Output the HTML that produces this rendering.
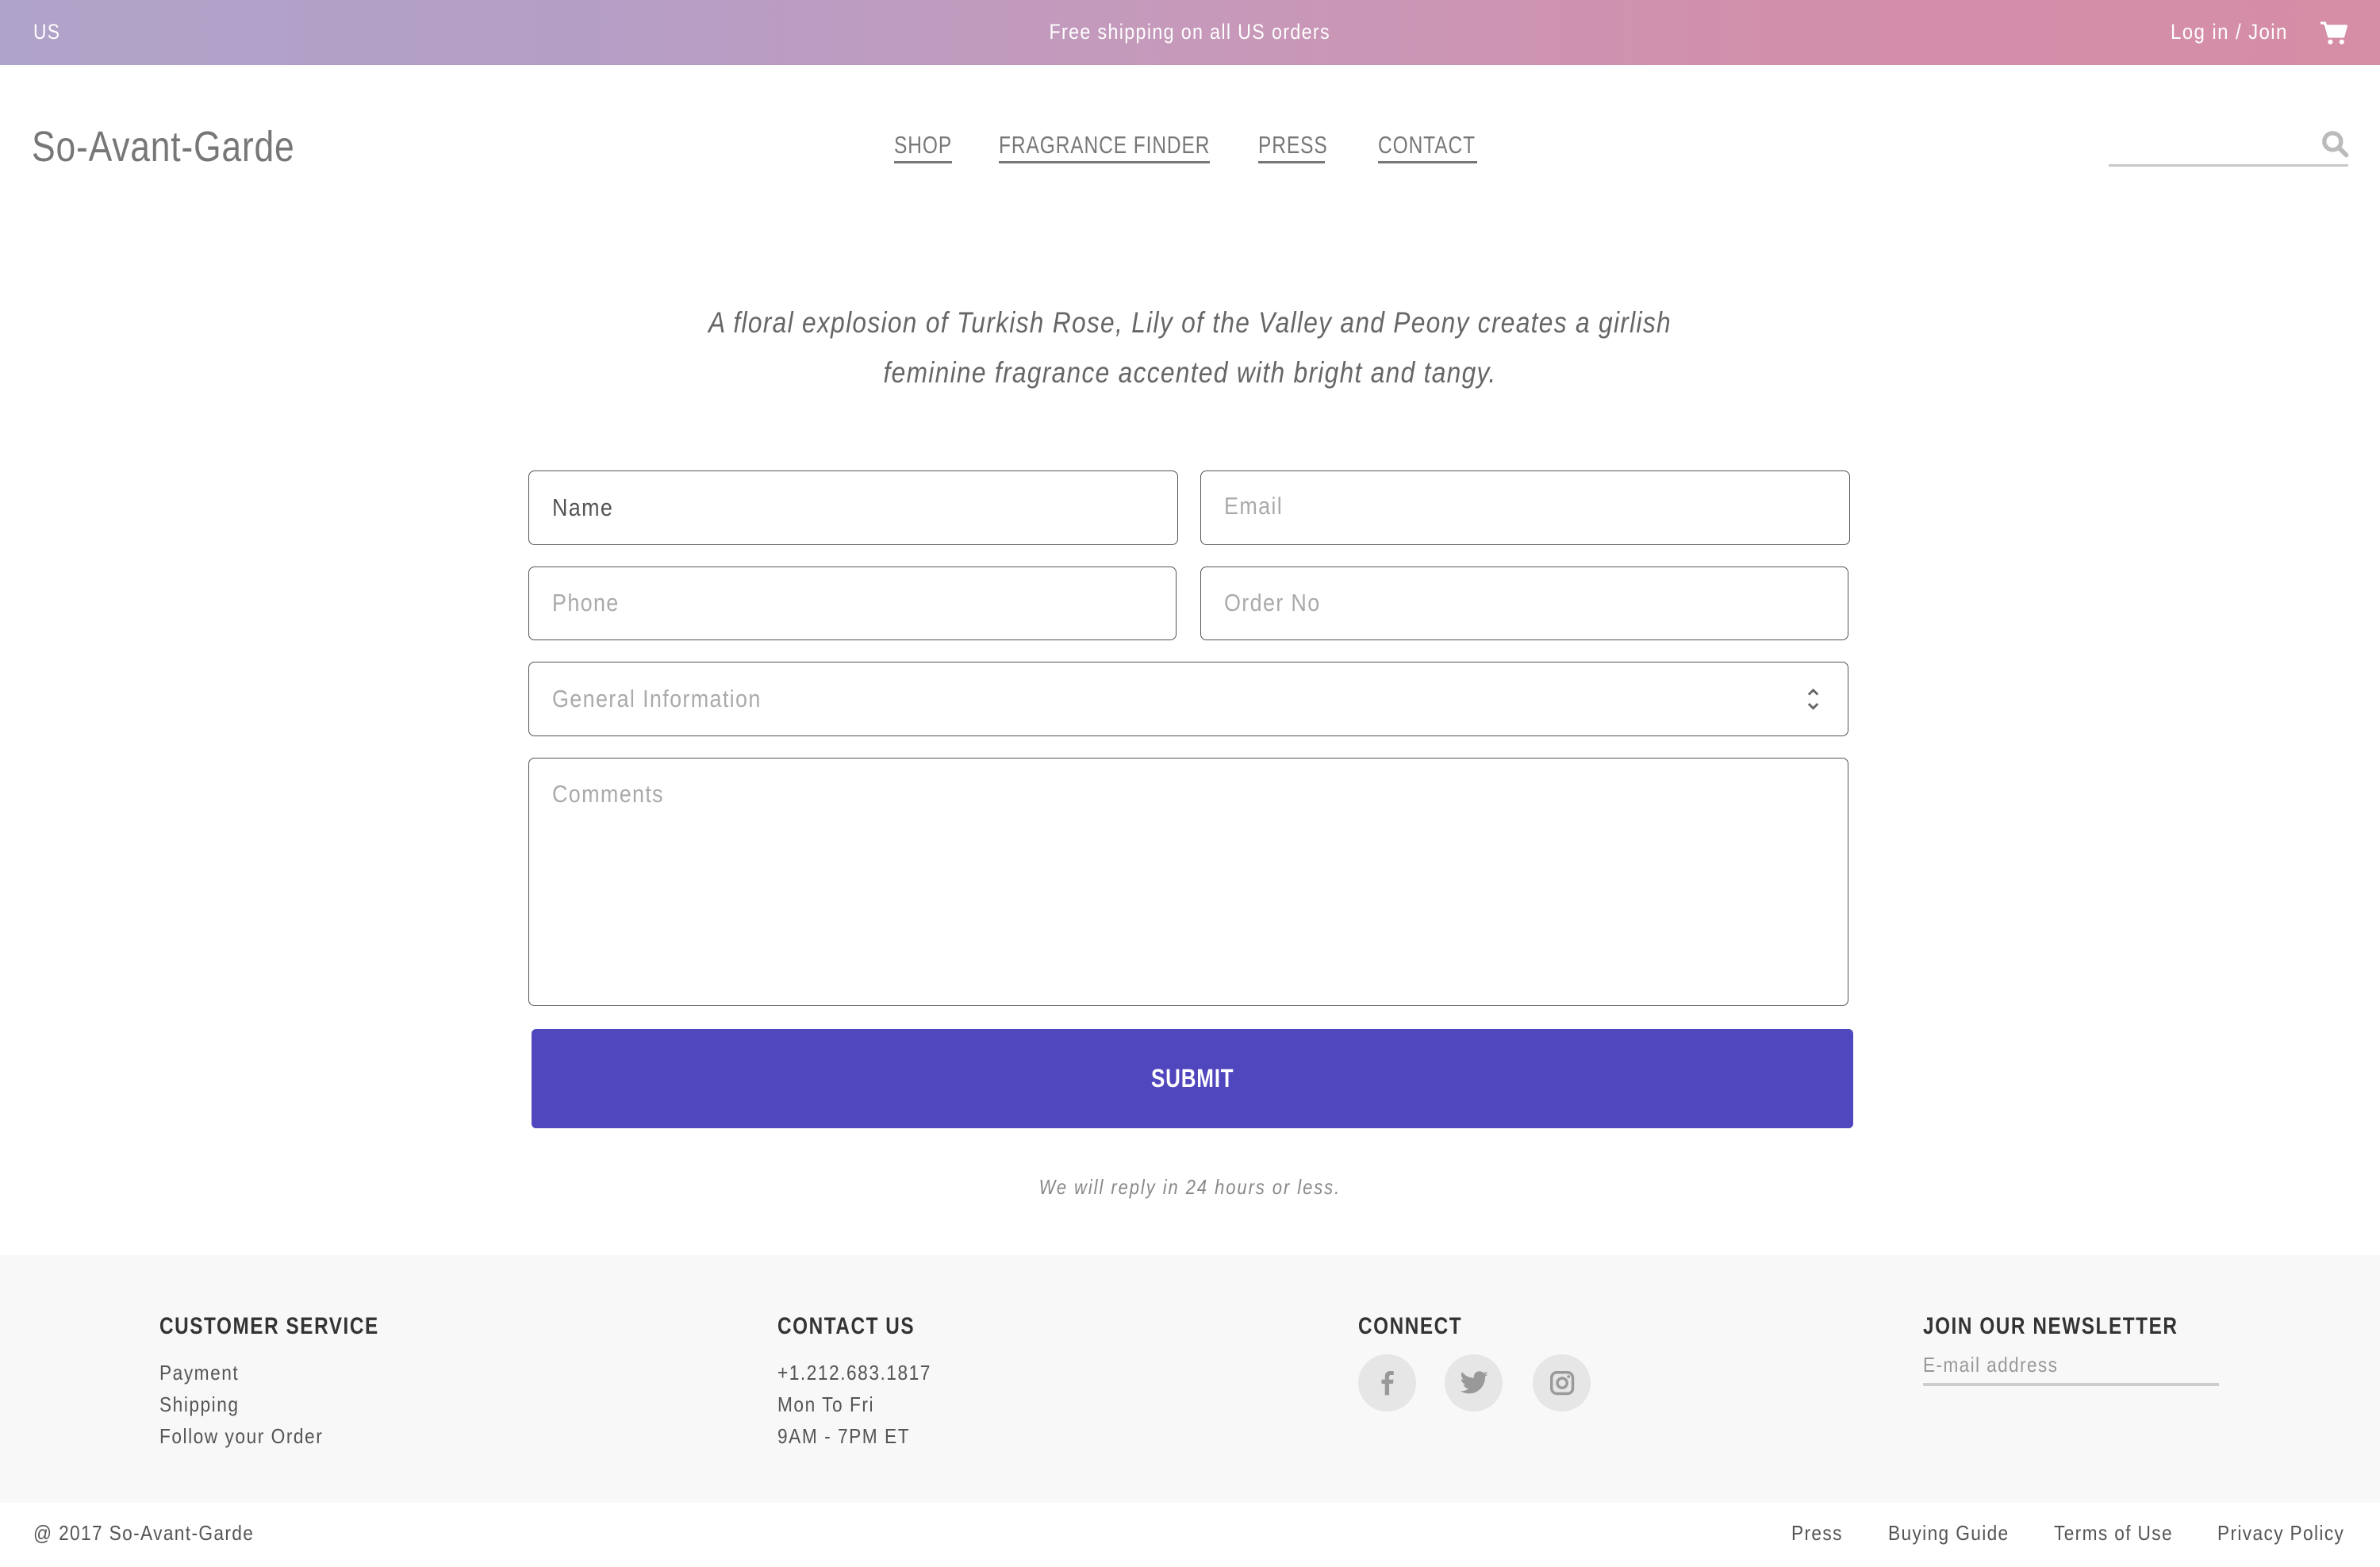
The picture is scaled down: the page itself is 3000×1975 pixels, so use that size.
<!DOCTYPE html>
<html><head><meta charset="utf-8">
<style>
html,body{margin:0;padding:0;width:3000px;height:1975px;overflow:hidden;background:#fff}
#w{position:relative;width:1568px;height:1032.3px;zoom:1.91327;font-family:"Liberation Sans",sans-serif;color:#666}
.a{position:absolute;white-space:nowrap}
.s{display:inline-block;transform-origin:left center}
#top{position:absolute;left:0;top:0;width:1568px;height:43px;background:linear-gradient(90deg,#b0a3c9 0%,#b59ec6 25%,#c699ba 50%,#d28fab 75%,#d68da6 100%)}
#top .a{color:#fff;font-size:14px;letter-spacing:.8px;top:13px}
.nav{font-size:16px;letter-spacing:.6px;color:#777;top:87px;border-bottom:2px solid #777;padding-bottom:1px;line-height:18px;overflow:visible}
.nav .s{transform:scaleX(.8)}
.box{position:absolute;border:1px solid #555;border-radius:4px;box-sizing:border-box;background:#fff}
.ph{position:absolute;left:15px;font-size:16px;letter-spacing:.8px;color:#aaa;transform:scaleX(.88);transform-origin:left center}
.fh{font-size:15.5px;font-weight:bold;color:#333;letter-spacing:1px;top:865px;transform:scaleX(.82);transform-origin:left center}
.fl{font-size:13.5px;color:#555;letter-spacing:.9px;transform:scaleX(.88);transform-origin:left center}
.ci{position:absolute;top:892px;width:38px;height:38px;border-radius:50%;background:#e6e6e6}
.ci svg{position:absolute;left:9px;top:9px}
.bl{font-size:13.5px;color:#555;letter-spacing:.8px;top:1003px;transform:scaleX(.88);transform-origin:left center}
</style></head><body><div id="w">
<div id="top">
<div class="a" style="left:22px;transform:scaleX(.85);transform-origin:left">US</div>
<div class="a" style="left:0;width:1568px;text-align:center"><span class="s" style="transform:scaleX(.87);transform-origin:center">Free shipping on all US orders</span></div>
<div class="a" style="left:1430px;transform:scaleX(.9);transform-origin:left">Log in / Join</div>
<svg class="a" style="left:1529px;top:14px" width="18" height="16" viewBox="0 0 18 16"><path d="M0 1h3l2.5 9h9.5l2-7H4" fill="#fff" stroke="#fff" stroke-width="1.6" stroke-linejoin="round"/><circle cx="6.5" cy="13.5" r="1.6" fill="#fff"/><circle cx="14" cy="13.5" r="1.6" fill="#fff"/></svg>
</div>
<div class="a" style="left:21px;top:81px;font-size:28px;color:#777;letter-spacing:.5px;transform:scaleX(.83);transform-origin:left">So-Avant-Garde</div>
<div class="a nav" style="left:589px;width:38px"><span class="s">SHOP</span></div>
<div class="a nav" style="left:658px;width:139px"><span class="s">FRAGRANCE FINDER</span></div>
<div class="a nav" style="left:829px;width:44px"><span class="s">PRESS</span></div>
<div class="a nav" style="left:908px;width:65px"><span class="s">CONTACT</span></div>
<div class="a" style="left:1389px;top:108px;width:158px;height:2px;background:#c8c8c8"></div>
<svg class="a" style="left:1529px;top:85px" width="19" height="19" viewBox="0 0 19 19"><circle cx="8" cy="8" r="5.5" fill="none" stroke="#bbb" stroke-width="2.8"/><path d="M12 12l5 5" stroke="#bbb" stroke-width="3" stroke-linecap="round"/></svg>
<div class="a" style="left:0;width:1568px;top:196px;text-align:center;font-style:italic;font-size:19.5px;line-height:33px;color:#666;letter-spacing:.8px;transform:scaleX(.85);transform-origin:center">A floral explosion of Turkish Rose, Lily of the Valley and Peony creates a girlish<br>feminine fragrance accented with bright and tangy.</div>
<div class="box" style="left:348px;top:310px;width:428px;height:49px"><div class="ph" style="top:15px;color:#555">Name</div></div>
<div class="box" style="left:791px;top:310px;width:428px;height:49px"><div class="ph" style="top:14px">Email</div></div>
<div class="box" style="left:348px;top:373px;width:427px;height:49px"><div class="ph" style="top:15px">Phone</div></div>
<div class="box" style="left:791px;top:373px;width:427px;height:49px"><div class="ph" style="top:15px">Order No</div></div>
<div class="box" style="left:348px;top:436px;width:870px;height:49px"><div class="ph" style="top:15px">General Information</div>
<svg style="position:absolute;left:841px;top:15px" width="10" height="18" viewBox="0 0 10 18"><path d="M2 6l3-3 3 3M2 12l3 3 3-3" fill="none" stroke="#666" stroke-width="1.5"/></svg></div>
<div class="box" style="left:348px;top:499px;width:870px;height:164px"><div class="ph" style="top:15px">Comments</div></div>
<div class="a" style="left:350px;top:678px;width:871px;height:65px;background:#5046be;border-radius:3px;color:#fff;font-weight:bold;font-size:17px;letter-spacing:.5px;text-align:center;line-height:65px"><span class="s" style="transform:scaleX(.8);transform-origin:center">SUBMIT</span></div>
<div class="a" style="left:0;width:1568px;top:775px;text-align:center;font-style:italic;font-size:13.5px;color:#888;letter-spacing:1.2px"><span class="s" style="transform:scaleX(.85);transform-origin:center">We will reply in 24 hours or less.</span></div>
<div class="a" style="left:0;top:827px;width:1568px;height:163px;background:#f8f8f8"></div>
<div class="a fh" style="left:105px">CUSTOMER SERVICE</div>
<div class="a fh" style="left:512px">CONTACT US</div>
<div class="a fh" style="left:895px">CONNECT</div>
<div class="a fh" style="left:1267px">JOIN OUR NEWSLETTER</div>
<div class="a fl" style="left:105px;top:895px;line-height:20.7px">Payment<br>Shipping<br>Follow your Order</div>
<div class="a fl" style="left:512px;top:895px;line-height:20.7px">+1.212.683.1817<br>Mon To Fri<br>9AM - 7PM ET</div>
<div class="ci" style="left:895px"><svg width="20" height="20" viewBox="0 0 20 20"><path d="M11 18V10.5h2.5l.4-2.8H11V6c0-.8.3-1.3 1.4-1.3H14V2.2c-.3 0-1.2-.1-2.2-.1-2.2 0-3.6 1.3-3.6 3.7v1.9H6v2.8h2.2V18z" fill="#999"/></svg></div>
<div class="ci" style="left:952px"><svg width="20" height="20" viewBox="0 0 24 24"><path d="M23 5a9 9 0 0 1-2.6.7A4.5 4.5 0 0 0 22.4 3a9 9 0 0 1-2.9 1.1A4.5 4.5 0 0 0 11.8 8 12.8 12.8 0 0 1 2.5 3.3a4.5 4.5 0 0 0 1.4 6 4.5 4.5 0 0 1-2-.6 4.5 4.5 0 0 0 3.6 4.5 4.5 4.5 0 0 1-2 .1 4.5 4.5 0 0 0 4.2 3.1A9 9 0 0 1 1 18.3 12.8 12.8 0 0 0 7.9 20.3c8.3 0 12.8-6.9 12.8-12.8v-.6A9 9 0 0 0 23 5z" fill="#999"/></svg></div>
<div class="ci" style="left:1010px"><svg width="20" height="20" viewBox="0 0 20 20"><rect x="3" y="3" width="14" height="14" rx="3.5" fill="none" stroke="#999" stroke-width="1.8"/><circle cx="10" cy="10" r="3.2" fill="none" stroke="#999" stroke-width="1.8"/><circle cx="14.2" cy="5.8" r="1" fill="#999"/></svg></div>
<div class="a" style="left:1267px;top:892px;font-size:13.5px;color:#999;letter-spacing:.8px;transform:scaleX(.88);transform-origin:left">E-mail address</div>
<div class="a" style="left:1267px;top:911px;width:195px;height:2px;background:#ccc"></div>
<div class="a bl" style="left:22px">@ 2017 So-Avant-Garde</div>
<div class="a bl" style="left:1180px">Press</div>
<div class="a bl" style="left:1244px">Buying Guide</div>
<div class="a bl" style="left:1353px">Terms of Use</div>
<div class="a bl" style="left:1461px">Privacy Policy</div>
</div></body></html>
